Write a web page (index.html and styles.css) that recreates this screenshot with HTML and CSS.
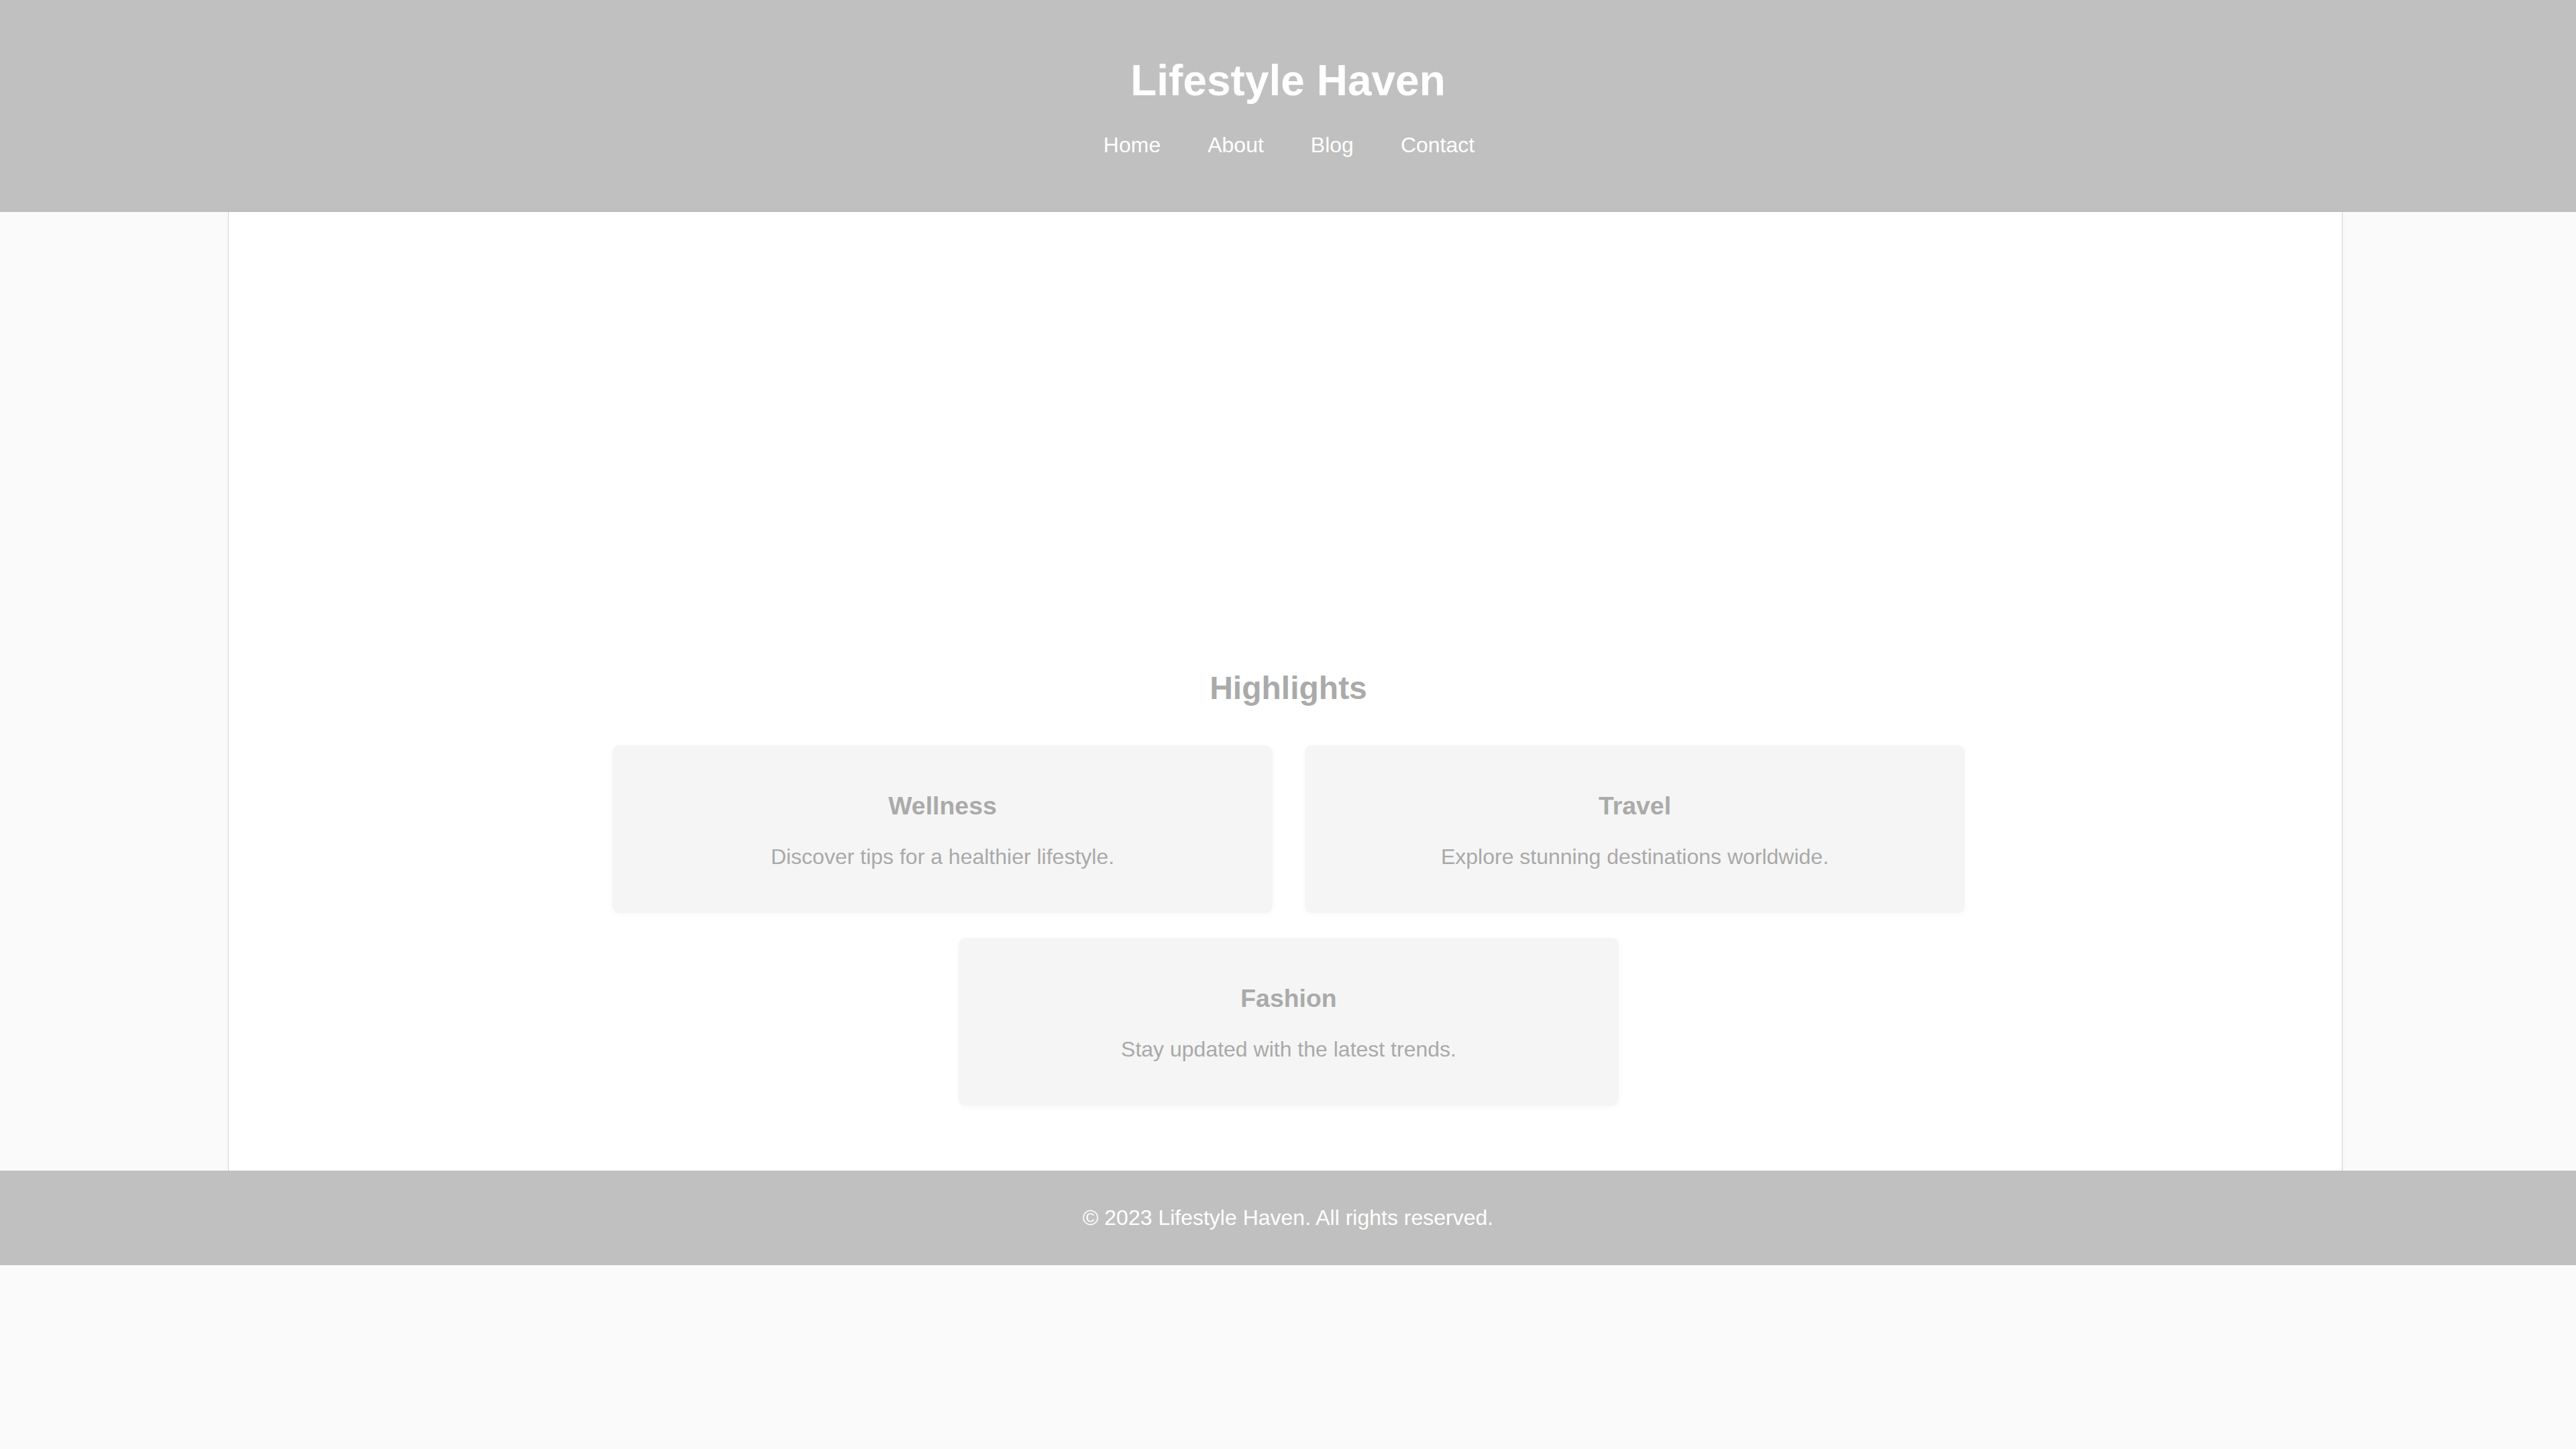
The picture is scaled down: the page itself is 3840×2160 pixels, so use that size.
FILE: index.html
```html
<!DOCTYPE html>
<html lang="en">
<head>
<meta charset="utf-8">
<title>Lifestyle Haven</title>
<link rel="stylesheet" href="styles.css">
</head>
<body>
<header class="site-header">
  <h1 class="site-title">Lifestyle Haven</h1>
  <nav class="site-nav">
    <a href="#">Home</a>
    <a href="#">About</a>
    <a href="#">Blog</a>
    <a href="#">Contact</a>
  </nav>
</header>
<main class="page">
  <section class="hero"></section>
  <section class="highlights">
    <h2 class="section-title">Highlights</h2>
    <div class="cards">
      <div class="card">
        <h3 class="card-title">Wellness</h3>
        <p class="card-text">Discover tips for a healthier lifestyle.</p>
      </div>
      <div class="card">
        <h3 class="card-title">Travel</h3>
        <p class="card-text">Explore stunning destinations worldwide.</p>
      </div>
      <div class="card">
        <h3 class="card-title">Fashion</h3>
        <p class="card-text">Stay updated with the latest trends.</p>
      </div>
    </div>
  </section>
</main>
<footer class="site-footer">
  <p class="footer-text">&copy; 2023 Lifestyle Haven. All rights reserved.</p>
</footer>
</body>
</html>
```

FILE: styles.css
```css
html, body {
  margin: 0;
  padding: 0;
}
body {
  background: #fafafa;
  font-family: "Liberation Sans", Arial, Helvetica, sans-serif;
  font-size: 32px;
  color: #aaaaaa;
}
.site-header {
  background: #c0c0c0;
  padding: 83px 0 81px;
  text-align: center;
  color: #ffffff;
}
.site-title {
  margin: 0 0 41px;
  font-size: 64px;
  line-height: 74px;
  font-weight: bold;
  color: #ffffff;
}
.site-nav {
  display: flex;
  justify-content: center;
  gap: 70px;
  line-height: 37px;
  padding-left: 3px;
}
.site-nav a {
  color: #ffffff;
  text-decoration: none;
  font-size: 32px;
}
.page {
  box-sizing: border-box;
  width: 3152px;
  margin: 0 0 0 340px;
  background: #ffffff;
  border-left: 1px solid #d4d4d4;
  border-right: 1px solid #d4d4d4;
  box-shadow: 0 0 6px rgba(0, 0, 0, 0.04);
  padding-bottom: 97px;
}
.hero {
  height: 642px;
}
.highlights {
  text-align: center;
}
.section-title {
  margin: 40px 0 58px;
  padding-left: 9px;
  font-size: 48px;
  line-height: 55px;
  font-weight: bold;
  color: #aaaaaa;
}
.cards {
  width: 2016px;
  margin: 0 auto 0 572px;
  display: flex;
  flex-wrap: wrap;
  justify-content: center;
  gap: 37px 48px;
}
.card {
  box-sizing: border-box;
  width: 984px;
  padding: 69px 20px 65px;
  background: #f5f5f5;
  border-radius: 10px;
  box-shadow: 0 2px 8px rgba(0, 0, 0, 0.03);
}
.card-title {
  margin: 0 0 36px;
  font-size: 37.44px;
  line-height: 43px;
  font-weight: bold;
  color: #aaaaaa;
}
.card-text {
  margin: 0;
  font-size: 32px;
  line-height: 37px;
  color: #a9a9a9;
}
.site-footer {
  background: #c0c0c0;
  padding: 52px 0;
  text-align: center;
}
.footer-text {
  margin: 0;
  font-size: 32px;
  line-height: 37px;
  color: #ffffff;
}
```
